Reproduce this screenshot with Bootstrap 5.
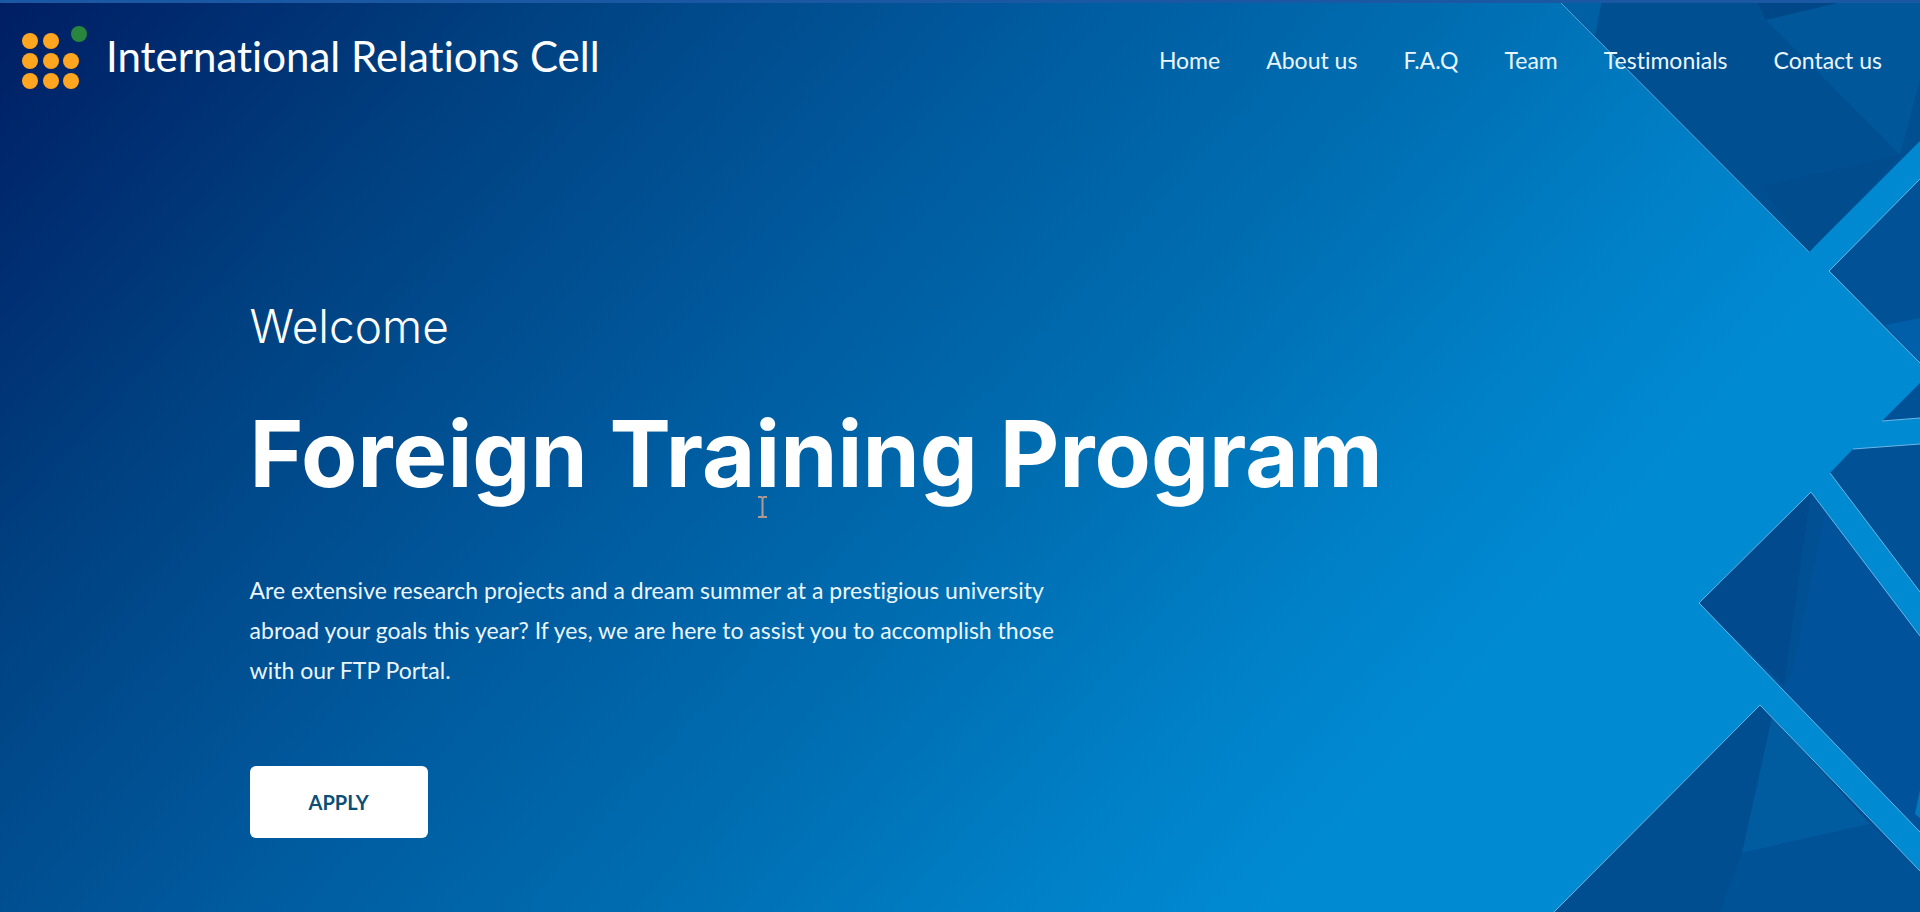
<!DOCTYPE html>
<html lang="en">
<head>
<meta charset="utf-8">
<meta name="viewport" content="width=device-width, initial-scale=1">
<title>International Relations Cell</title>
<link rel="stylesheet" href="https://cdn.jsdelivr.net/npm/bootstrap@5.3.0/dist/css/bootstrap.min.css">
<style>
  body { font-family: Lato, "Open Sans", sans-serif; font-variant-ligatures: none; }
  .page {
    border-top: 3px solid #1a58a4;
    background: linear-gradient(132deg, #001e63 0%, #002c70 8%, #004080 19%, #005a9e 38%, #006fb3 55%, #0080c7 67%, #008ad2 76%, #008ad2 100%);
  }
  .facets { inset: 0; }
  .site-nav { padding: 17px 20px; }
  .brand-name { font-size: 42px; line-height: 56px; }
  .site-nav .nav-link { font-size: 23px; line-height: 32px; padding: 12px 0 4px; color: #eaf6ff; }
  .menu { column-gap: 46px; padding-right: 18px; }
  .hero { padding: 189px 24px 60px 13%; }
  .welcome, .headline { font-family: Inter, Lato, sans-serif; }
  .welcome { font-size: 46px; line-height: 56px; font-weight: 300; margin-bottom: 48px; }
  .headline { font-size: 92px; line-height: 104px; font-weight: 700; margin-bottom: 64px; }
  .intro { font-size: 23px; line-height: 40px; max-width: 830px; margin-bottom: 76px; color: #eaf6ff; }
  .apply { font-size: 20px; line-height: 24px; padding: 24px 59px; font-weight: 700; color: #0b4f74; border-radius: 6px; }
  .apply:hover { color: #0b4f74; }
  .caret { left: 508px; top: 94px; }
</style>
</head>
<body>
<div class="page position-relative min-vh-100 text-white overflow-hidden">
  <svg class="facets position-absolute w-100 h-100" viewBox="0 3 1920 909" preserveAspectRatio="xMaxYMin slice" aria-hidden="true">
    <g fill="#005196">
      <path d="M1558 0L1809 252L1920 141V0Z" fill="#004f91"/>
      <path d="M1558 0H1602L1595 36Z" fill="#0060a4"/>
      <path d="M1756 0H1850L1766 20Z" fill="#004787"/>
      <path d="M1766 20L1850 0H1920V80L1900 155Z" fill="#00579a"/>
      <path d="M1760 186L1900 155L1809 252Z" fill="#004c8d"/>
      <path d="M1920 179L1829 271L1920 363Z"/>
      <path d="M1885 325L1920 318V363Z" fill="#005fa8"/>
      <path d="M1920 383L1882 421L1920 418Z"/>
      <path d="M1920 444L1853 449L1830 473L1920 592Z"/>
      <path d="M1811 492L1699 603L1920 832V636Z" fill="#00539a"/>
      <path d="M1811 492L1699 603L1784 686Z" fill="#004a8d"/>
      <path d="M1784 686L1811 492L1825 512L1792 673Z" fill="#005093"/>
      <path d="M1915 814L1920 790V818Z" fill="#0079c0"/>
      <path d="M1760 705L1554 912H1920V871Z" fill="#004d90"/>
      <path d="M1772 717L1742 853L1870 824Z" fill="#005c9f"/>
      <path d="M1742 853L1870 824L1920 871V912H1720Z" fill="#005296"/>
    </g>
    <g fill="none" stroke="#6bb7e6" stroke-width="1">
      <path d="M1558 0L1809 252" opacity=".8"/>
      <path d="M1920 179L1829 271L1920 363"/>
      <path d="M1882 421L1920 418M1920 444L1853 449M1830 473L1920 592"/>
      <path d="M1920 636L1811 492L1699 603L1920 832"/>
      <path d="M1554 912L1760 705L1920 871"/>
    </g>
  </svg>

  <header class="site-nav position-relative d-flex flex-wrap align-items-center justify-content-between">
    <a class="d-flex align-items-center gap-3 text-white text-decoration-none" href="#">
      <svg width="70" height="72" viewBox="20 20 70 72" aria-hidden="true">
        <g fill="#ffa520">
          <circle cx="30" cy="41" r="8"/><circle cx="51" cy="41" r="8"/>
          <circle cx="30" cy="61" r="8"/><circle cx="51" cy="61" r="8"/><circle cx="71" cy="61" r="8"/>
          <circle cx="30" cy="81" r="8"/><circle cx="51" cy="81" r="8"/><circle cx="71" cy="81" r="8"/>
        </g>
        <circle cx="79" cy="34" r="8" fill="#28873c"/>
      </svg>
      <span class="brand-name">International Relations Cell</span>
    </a>
    <nav aria-label="Main">
      <ul class="menu nav">
        <li class="nav-item"><a class="nav-link" href="#">Home</a></li>
        <li class="nav-item"><a class="nav-link" href="#">About us</a></li>
        <li class="nav-item"><a class="nav-link" href="#">F.A.Q</a></li>
        <li class="nav-item"><a class="nav-link" href="#">Team</a></li>
        <li class="nav-item"><a class="nav-link" href="#">Testimonials</a></li>
        <li class="nav-item"><a class="nav-link" href="#">Contact us</a></li>
      </ul>
    </nav>
  </header>

  <main class="hero position-relative">
    <p class="welcome">Welcome</p>
    <div class="position-relative">
      <h1 class="headline">Foreign Training Program</h1>
      <svg class="caret position-absolute" width="9" height="22" viewBox="0 0 9 22" aria-hidden="true">
        <path d="M0 1H3L4.500 2L6 1H9M0 21H3L4.500 20L6 21H9M4.500 2V20" fill="none" stroke="#b39a90" stroke-width="2"/>
      </svg>
    </div>
    <p class="intro">Are extensive research projects and a dream summer at a prestigious university abroad your goals this year? If yes, we are here to assist you to accomplish those with our FTP Portal.</p>
    <button type="button" class="apply btn btn-light bg-white border-0">APPLY</button>
  </main>
</div>
<script src="https://cdn.jsdelivr.net/npm/bootstrap@5.3.0/dist/js/bootstrap.bundle.min.js"></script>
</body>
</html>
